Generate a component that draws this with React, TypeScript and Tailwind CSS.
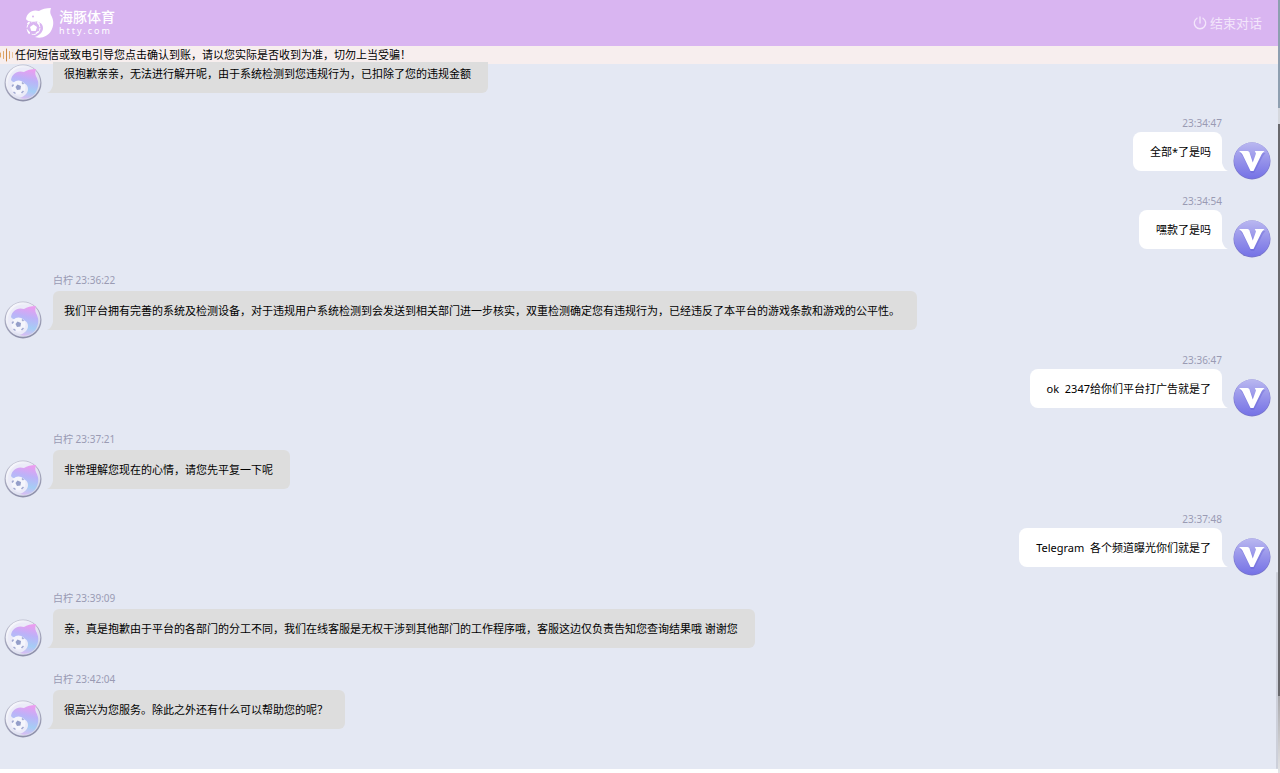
import { useId } from 'react';

type Message = {
    id: number;
    from: 'agent' | 'visitor';
    time?: string;
    text: string;
};

const AGENT_NAME = '白柠';

const messages: Message[] = [
    { id: 1, from: 'agent', text: '很抱歉亲亲，无法进行解开呢，由于系统检测到您违规行为，已扣除了您的违规金额' },
    { id: 2, from: 'visitor', time: '23:34:47', text: '全部*了是吗' },
    { id: 3, from: 'visitor', time: '23:34:54', text: '嘿款了是吗' },
    { id: 4, from: 'agent', time: '23:36:22', text: '我们平台拥有完善的系统及检测设备，对于违规用户系统检测到会发送到相关部门进一步核实，双重检测确定您有违规行为，已经违反了本平台的游戏条款和游戏的公平性。' },
    { id: 5, from: 'visitor', time: '23:36:47', text: 'ok  2347给你们平台打广告就是了' },
    { id: 6, from: 'agent', time: '23:37:21', text: '非常理解您现在的心情，请您先平复一下呢' },
    { id: 7, from: 'visitor', time: '23:37:48', text: 'Telegram  各个频道曝光你们就是了' },
    { id: 8, from: 'agent', time: '23:39:09', text: '亲，真是抱歉由于平台的各部门的分工不同，我们在线客服是无权干涉到其他部门的工作程序哦，客服这边仅负责告知您查询结果哦 谢谢您' },
    { id: 9, from: 'agent', time: '23:42:04', text: '很高兴为您服务。除此之外还有什么可以帮助您的呢？' },
];

const DOLPHIN = 'M0 11C1 5 6 1 13 3C16 1 20 0 25 0C24 3 24 5 25 7C28 12 28 18 25 23C22 28 16 31 9 29C14 27 17 24 17 20C17 15 12 13 7 13C4 14 1 13 0 11Z';

function Logo() {
    return (
        <svg viewBox="0 0 28 30" className="w-7 h-[30px]" aria-hidden="true">
            <path d={DOLPHIN} fill="#fff" />
            <circle cx="7" cy="8.500" r="1" fill="#d9b5f1" />
            <circle cx="7.500" cy="20" r="6.500" fill="none" stroke="#fff" strokeWidth="1" strokeDasharray="5 1.800" />
            <path d="M7.500 16.500l3.500 2.500-1.300 4H5.300L4 19z" fill="#fff" />
            <path d="M1.500 16l2-2M11.500 14l2 2.500M2 23l1.500 2.500M10 25.500l2.500-2" stroke="#fff" strokeWidth="1.600" />
        </svg>
    );
}

function AgentAvatar() {
    const id = useId();
    return (
        <svg viewBox="0 0 38 38" className="w-[38px] h-[38px] shrink-0" aria-hidden="true">
            <defs>
                <linearGradient id={`${id}ring`} x1="0" y1="0" x2="0.300" y2="1">
                    <stop offset="0" stopColor="#c3c4d3" />
                    <stop offset="1" stopColor="#8e90aa" />
                </linearGradient>
                <linearGradient id={`${id}disc`} x1="0" y1="0" x2="1" y2="1">
                    <stop offset="0" stopColor="#fdfdff" />
                    <stop offset="1" stopColor="#cfd2e8" />
                </linearGradient>
                <linearGradient id={`${id}body`} x1="0.600" y1="0" x2="0.400" y2="1">
                    <stop offset="0" stopColor="#eb9df0" />
                    <stop offset="0.350" stopColor="#bcb2f8" />
                    <stop offset="0.700" stopColor="#a5cdf5" />
                    <stop offset="1" stopColor="#dcbcf3" />
                </linearGradient>
            </defs>
            <circle cx="19" cy="19" r="18.500" fill={`url(#${id}ring)`} />
            <circle cx="19" cy="18.500" r="17.300" fill={`url(#${id}disc)`} />
            <circle cx="19" cy="18.500" r="15" fill="#ebebf8" />
            <g transform="translate(7 5)">
                <path d={DOLPHIN} fill={`url(#${id}body)`} />
                <circle cx="7.500" cy="18.500" r="7" fill="#f4f5fc" />
                <path d="M6.500 15.500l3.500 1.500-.5 3.500-3.500.5-1.500-3z" fill="#949ec9" />
                <path d="M1 17.500l1.500-2M11 13.500l1.500 1.500M2.500 23l2 1.500M10.500 24l2-2" stroke="#a0a8d0" strokeWidth="1.500" />
            </g>
        </svg>
    );
}

function VisitorAvatar() {
    const id = useId();
    return (
        <svg viewBox="0 0 38 38" className="w-[38px] h-[38px] shrink-0" aria-hidden="true">
            <defs>
                <linearGradient id={`${id}bg`} x1="0" y1="0" x2="0" y2="1">
                    <stop offset="0" stopColor="#b9b7f0" />
                    <stop offset="0.500" stopColor="#9693ea" />
                    <stop offset="1" stopColor="#7572e6" />
                </linearGradient>
            </defs>
            <circle cx="19" cy="19" r="18.500" fill="#7774c9" />
            <circle cx="19" cy="18.500" r="18" fill={`url(#${id}bg)`} />
            <path d="M7 11H17L20.500 21L24 11H32.500L30 14L21 31H18L9.500 14Z" fill="#5f5bd0" opacity="0.350" />
            <path d="M6 9H14.500Q16 9 16.500 10.500L19.800 20.500L23 11.500L21.800 9H31.500Q29.500 10.500 28.500 12.500L20.500 29H17.500L9.500 12.500Q8.500 10.500 6 9Z" fill="#fff" />
        </svg>
    );
}

function WaveIcon() {
    return (
        <svg viewBox="0 0 14 14" className="w-3.5 h-3.5 shrink-0" fill="none" strokeLinecap="round" aria-hidden="true">
            <path d="M0.500 5v4M3.500 3.500v7M9.500 3.500v7" stroke="#e0a868" />
            <path d="M6.500 1v12" stroke="#c98a4b" />
            <path d="M12.500 4.500v5" stroke="#ecc79b" />
        </svg>
    );
}

function PowerIcon() {
    return (
        <svg viewBox="0 0 14 14" className="w-3.5 h-3.5" fill="none" stroke="currentColor" strokeWidth="1.300" strokeLinecap="round" aria-hidden="true">
            <path d="M7 1v6M4 2.200a5.700 5.700 0 1 0 6 0" />
        </svg>
    );
}

function AgentMessage({ message }: { message: Message }) {
    return (
        <li className="flex items-end gap-[11px] pl-1 pr-14">
            <AgentAvatar />
            <div className="pb-[9px]">
                {message.time && (
                    <p className="pb-0.5 text-[10px] leading-[18px] text-[#9a9bb3]">
                        {AGENT_NAME} {message.time}
                    </p>
                )}
                <div className="relative rounded-md rounded-bl-none bg-[#dddddd] pl-[11px] pr-[17px] py-[11px]">
                    <svg viewBox="0 0 6 8" className="absolute -left-1.5 bottom-0 w-1.5 h-2" aria-hidden="true">
                        <path d="M6 0C5 4 3 7 0 8H6V0Z" fill="#dddddd" />
                    </svg>
                    <p className="text-[11px] leading-[17px] text-black">{message.text}</p>
                </div>
            </div>
        </li>
    );
}

function VisitorMessage({ message }: { message: Message }) {
    return (
        <li className="flex items-end justify-end gap-[11px] pl-14 pr-[5px]">
            <div className="pb-[9px]">
                <p className="text-right text-[10px] leading-[17px] text-[#9a9bb3]">{message.time}</p>
                <div className="relative rounded-lg rounded-br-none bg-white pl-[17px] pr-[11px] py-[11px]">
                    <svg viewBox="0 0 6 8" className="absolute -right-1.5 bottom-0 w-1.5 h-2" aria-hidden="true">
                        <path d="M0 0C1 4 3 7 6 8H0V0Z" fill="#fff" />
                    </svg>
                    <p className="text-[11px] leading-[17px] whitespace-pre-wrap text-black">{message.text}</p>
                </div>
            </div>
            <VisitorAvatar />
        </li>
    );
}

export default function App() {
    return (
        <div className="flex h-screen bg-white font-['Noto_Sans','Noto_Sans_CJK_SC',sans-serif]">
            <div className="flex min-w-0 flex-1 flex-col pb-1">
                <header className="flex h-[46px] shrink-0 items-center justify-between bg-[#d9b5f1] pl-[26px] pr-4">
                    <div className="flex items-center gap-[5px] text-white">
                        <Logo />
                        <div>
                            <h1 className="text-sm leading-4 font-medium">海豚体育</h1>
                            <p className="text-[9px] leading-3 tracking-[2px]">htty.com</p>
                        </div>
                    </div>
                    <button type="button" className="flex items-center gap-[3px] text-[13px] leading-5 text-[#f3e6fb]">
                        <PowerIcon />
                        结束对话
                    </button>
                </header>

                <div className="flex h-[18px] shrink-0 items-center gap-px bg-[#f7eeee] text-[11px] leading-4 text-black">
                    <WaveIcon />
                    <p className="truncate">任何短信或致电引导您点击确认到账，请以您实际是否收到为准，切勿上当受骗！</p>
                </div>

                <main className="flex min-h-0 flex-1 bg-[#e4e8f3]">
                    <ul className="-mt-0.5 flex flex-1 flex-col justify-end gap-[13px] overflow-hidden pb-[31px]">
                        {messages.map((message) =>
                            message.from === 'agent' ? (
                                <AgentMessage key={message.id} message={message} />
                            ) : (
                                <VisitorMessage key={message.id} message={message} />
                            )
                        )}
                    </ul>
                    <div className="flex w-0.5 flex-col justify-end">
                        <div className="h-[28%] rounded-full bg-[#cdd0da]" />
                    </div>
                </main>
            </div>

            {/* sliver of the window behind */}
            <div className="flex w-0.5 flex-col" aria-hidden="true">
                <div className="h-[14%] bg-[#8e9fb0]" />
                <div className="h-[2%] bg-[#d5d8de]" />
                <div className="h-[74%] bg-[#68686c]" />
                <div className="flex-1 bg-gradient-to-b from-[#a9a9ad] to-[#e4e4e6]" />
            </div>
        </div>
    );
}
